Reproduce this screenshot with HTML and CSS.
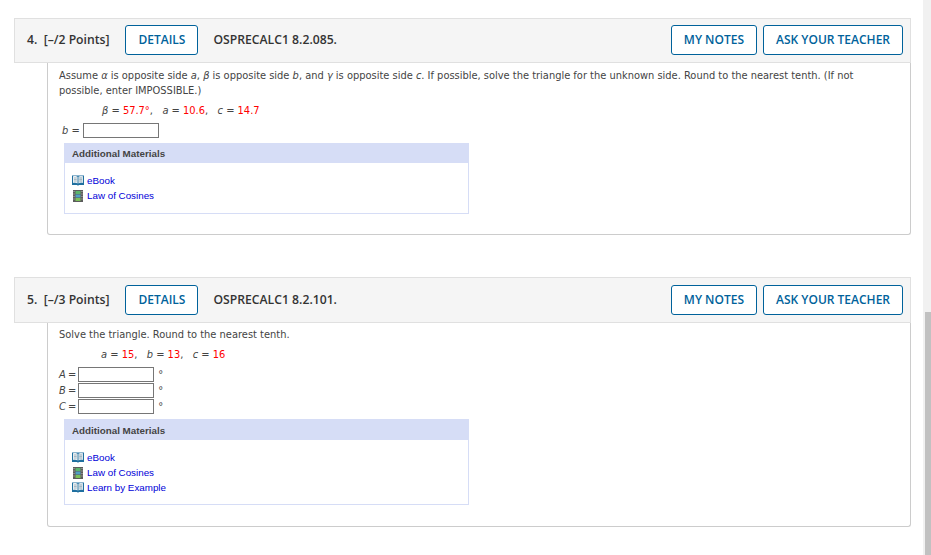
FILE: index.html
```html
<!DOCTYPE html>
<html lang="en">
<head>
<meta charset="utf-8">
<title>Questions</title>
<link rel="stylesheet" href="styles.css">
</head>
<body>
<svg class="defs" width="0" height="0" aria-hidden="true">
  <symbol id="book" viewBox="0 0 12 11">
    <path d="M0 .5h12v9.500H7l-1 .8-1-.8H0z" fill="#1f6f9f"/>
    <path d="M1 1.200c1.800-.5 3.800-.3 4.600.6V8.500C4.600 7.800 3 7.700 1 8z" fill="#e8eef2"/>
    <path d="M11 1.200c-1.800-.5-3.800-.3-4.600.6V8.500C7.400 7.800 9 7.700 11 8z" fill="#d8e4ec"/>
    <path d="M2 3h2.700M2 4.500h2.700M2 6h2.700M7.300 3H10M7.300 4.500H10M7.300 6H10" stroke="#8fa3b0" stroke-width=".7"/>
  </symbol>
  <symbol id="film" viewBox="0 0 10 12">
    <rect width="10" height="12" fill="#5c5c5c"/>
    <rect x="2.500" y="1" width="5" height="3" fill="#5cb56c"/>
    <rect x="2.500" y="4.500" width="5" height="3" fill="#4f9fc4"/>
    <rect x="2.500" y="8" width="5" height="3" fill="#7cbf5a"/>
    <path d="M.5 1h1v1h-1zM.5 3.500h1v1h-1zM.5 6h1v1h-1zM.5 8.500h1v1h-1zM8.500 1h1v1h-1zM8.500 3.500h1v1h-1zM8.500 6h1v1h-1zM8.500 8.500h1v1h-1z" fill="#bbb"/>
  </symbol>
</svg>
<div class="page">
  <main class="questions">
    <section class="question q4">
      <header class="qhead">
        <span class="qnum">4.&nbsp; [–/2 Points]</span>
        <button class="btn details">DETAILS</button>
        <span class="qcode">OSPRECALC1 8.2.085.</span>
        <button class="btn notes">MY NOTES</button>
        <button class="btn">ASK YOUR TEACHER</button>
      </header>
      <div class="qbody">
        <p class="prompt">Assume <i class="var">α</i> is opposite side <i class="var">a</i>, <i class="var">β</i> is opposite side <i class="var">b</i>, and <i class="var">γ</i> is opposite side <i class="var">c</i>. If possible, solve the triangle for the unknown side. Round to the nearest tenth. (If not possible, enter IMPOSSIBLE.)</p>
        <p class="given given-wide"><i class="var">β</i> = <span class="num">57.7°</span>, &nbsp; <i class="var">a</i> = <span class="num">10.6</span>, &nbsp; <i class="var">c</i> = <span class="num">14.7</span></p>
        <div class="answer single"><i class="var">b</i> =<input class="field" type="text"></div>
        <div class="materials">
          <h3 class="mhead">Additional Materials</h3>
          <ul class="mlist">
            <li><svg class="ico book"><use href="#book"/></svg><a href="#">eBook</a></li>
            <li><svg class="ico film"><use href="#film"/></svg><a href="#">Law of Cosines</a></li>
          </ul>
        </div>
      </div>
    </section>
    <section class="question q5">
      <header class="qhead">
        <span class="qnum">5.&nbsp; [–/3 Points]</span>
        <button class="btn details">DETAILS</button>
        <span class="qcode">OSPRECALC1 8.2.101.</span>
        <button class="btn notes">MY NOTES</button>
        <button class="btn">ASK YOUR TEACHER</button>
      </header>
      <div class="qbody">
        <p class="prompt">Solve the triangle. Round to the nearest tenth.</p>
        <p class="given"><i class="var">a</i> = <span class="num">15</span>, &nbsp; <i class="var">b</i> = <span class="num">13</span>, &nbsp; <i class="var">c</i> = <span class="num">16</span></p>
        <div class="answers">
          <div class="answer row"><i class="var lbl">A</i>=<input class="field" type="text"><span class="deg">°</span></div>
          <div class="answer row"><i class="var lbl">B</i>=<input class="field" type="text"><span class="deg">°</span></div>
          <div class="answer row"><i class="var lbl">C</i>=<input class="field" type="text"><span class="deg">°</span></div>
        </div>
        <div class="materials">
          <h3 class="mhead">Additional Materials</h3>
          <ul class="mlist">
            <li><svg class="ico book"><use href="#book"/></svg><a href="#">eBook</a></li>
            <li><svg class="ico film"><use href="#film"/></svg><a href="#">Law of Cosines</a></li>
            <li><svg class="ico book"><use href="#book"/></svg><a href="#">Learn by Example</a></li>
          </ul>
        </div>
      </div>
    </section>
  </main>
  <aside class="scrollbar"><div class="thumb"></div></aside>
</div>
</body>
</html>
```

FILE: styles.css
```css
* { box-sizing: border-box; }
html, body { margin: 0; height: 555px; overflow: hidden; background: #fff; }
body { font-family: "DejaVu Sans", Verdana, sans-serif; font-size: 9.900px; color: #444; }
.defs { position: absolute; }
.page { display: flex; height: 555px; }
.questions { flex: 1; padding: 18px 12px 0 14px; min-width: 0; }
.scrollbar { width: 8px; background: #f1f1f1; padding-top: 312px; display: flex; }
.thumb { flex: 1; margin-left: 2px; background: #c1c1c1; }

.q5 { margin-top: 42px; }
.qhead {
  display: flex; align-items: center; height: 45px; padding: 0 7px 1px 12px;
  background: #f5f5f5; border: 1px solid #e0e0e0;
  font-family: "Open Sans", sans-serif; font-size: 12.200px; font-weight: 600; color: #333;
}
.q5 .qhead { height: 46px; padding-bottom: 0; }
.qnum { margin-right: 16px; padding-bottom: 2px; white-space: nowrap; }
.qcode { margin-left: 15px; margin-right: auto; padding-bottom: 2px; white-space: nowrap; }
.btn {
  height: 30px; padding: 0 12px 2px; background: #fff; border: 1px solid #00629b; border-radius: 3px;
  font-family: "Open Sans", sans-serif; font-size: 12px; font-weight: 600; color: #00629b; white-space: nowrap;
}
.notes { margin-right: 6px; }
.details { width: 73px; padding: 0 0 2px; }

.qbody {
  margin-left: 33px; padding: 5px 11px 20px 11px;
  border: 1px solid #ccc; border-top: 0; border-radius: 0 0 3px 3px;
}
.q4 .qbody { height: 172px; }
.q5 .qbody { height: 204px; padding-top: 4px; }
.prompt { margin: 0; max-width: 800px; line-height: 15px; }
.given { margin: 5px 0 0; padding-left: 42px; line-height: 15px; }
.given-wide { padding-left: 43px; }
.var { font-style: italic; }
.num { color: #f00; }
.answer { display: flex; align-items: center; height: 15px; white-space: pre; }
.single { margin-top: 5px; padding-left: 3px; }
.single .field { margin-left: 3px; }
.answers { margin-top: 4px; }
.row { height: 16px; }
.lbl { width: 9px; }
.field { width: 76px; height: 15px; margin: 0 0 0 1px; padding: 0; border: 1px solid #767676; background: #fff; }
.row .field { margin-left: 2px; }
.deg { margin-left: 4px; }

.materials { width: 405px; margin: 5px 0 0 5px; border: 1px solid #d6ddf6; }
.mhead {
  margin: 0; padding-left: 7px; height: 19px; line-height: 19px; background: #d6ddf6;
  font-family: "Liberation Sans", Arial, sans-serif; font-size: 9.800px; font-weight: 700; color: #444;
}
.q5 .mhead { height: 20px; line-height: 21px; }
.mlist { list-style: none; margin: 0; padding: 10px 7px 10px; font-family: "Liberation Sans", Arial, sans-serif; font-size: 9.800px; }
.q5 .mlist { padding-bottom: 9px; }
.mlist li { display: flex; align-items: center; height: 15px; }
.mlist a { color: #0000d8; text-decoration: none; }
.ico { width: 12px; height: 11px; margin-right: 3px; flex: none; }
.film { height: 12px; }
```
